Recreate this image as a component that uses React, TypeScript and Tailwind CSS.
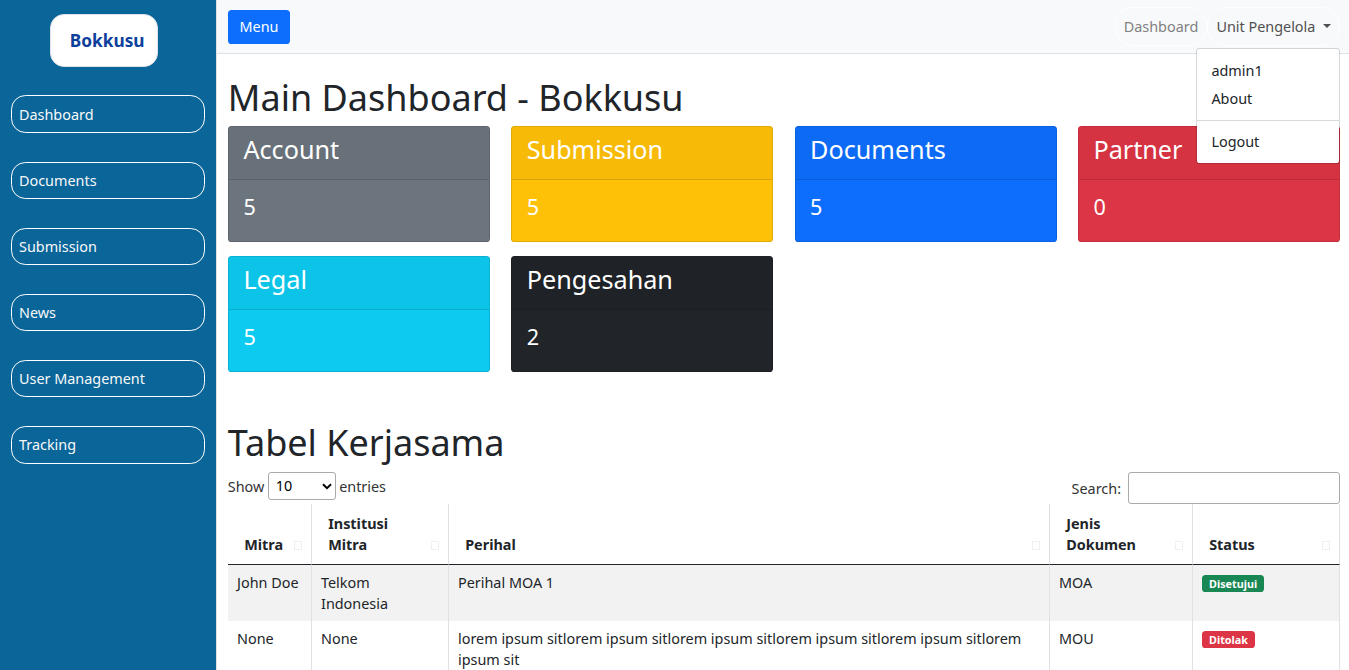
import React from "react";

const links = ["Dashboard", "Documents", "Submission", "News", "User Management", "Tracking"];

const cards = [
  { title: "Account", value: 5, color: "bg-[#6c757d]" },
  { title: "Submission", value: 5, color: "bg-[#ffc107]" },
  { title: "Documents", value: 5, color: "bg-[#0d6efd]" },
  { title: "Partner", value: 0, color: "bg-[#dc3545]" },
  { title: "Legal", value: 5, color: "bg-[#0dcaf0]" },
  { title: "Pengesahan", value: 2, color: "bg-[#212529]" },
];

const headers = ["Mitra", "Institusi Mitra", "Perihal", "Jenis Dokumen", "Status"];

const rows = [
  { mitra: "John Doe", institusi: "Telkom Indonesia", perihal: "Perihal MOA 1", jenis: "MOA", status: "Disetujui", badge: "bg-[#198754]" },
  {
    mitra: "None",
    institusi: "None",
    perihal: "lorem ipsum sitlorem ipsum sitlorem ipsum sitlorem ipsum sitlorem ipsum sitlorem ipsum sit",
    jenis: "MOU",
    status: "Ditolak",
    badge: "bg-[#dc3545]",
  },
];

function Sidebar() {
  return (
    <aside className="w-[216px] shrink-0 bg-[#0a6599] text-white">
      <div className="ml-[50px] mt-[14px] flex h-[53px] w-[108px] items-center rounded-[14px] border border-[#dee2e6] bg-white pl-[18.8px] text-[17.28px] font-bold text-[#0d409b]">
        Bokkusu
      </div>
      <nav className="mt-7 flex flex-col gap-[29px] px-[11px]">
        {links.map((l) => (
          <a key={l} className="h-[37px] rounded-[14.4px] border border-white pl-[7px] pt-[7px] text-[#f8f9fa] first:h-[38px] first:pt-[8px] last:h-[38px]">
            {l}
          </a>
        ))}
      </nav>
    </aside>
  );
}

function Topbar() {
  return (
    <header className="flex h-[54px] items-start justify-between border-b border-[#dee2e6] bg-[#f8f9fa] pl-[11px] pr-[9px]">
      <button className="mt-[10px] h-[34px] w-[62px] rounded-[3.6px] bg-[#0d6efd] pb-[2px] text-white">Menu</button>
      <div className="mt-[7px] flex">
        <a className="flex h-[39px] w-[92px] items-center justify-center rounded-[18px] border border-white text-[#808182]">Dashboard</a>
        <div className="relative">
          <a className="flex h-[39px] w-[133px] items-center rounded-[18px] border border-white pl-[8.4px] text-[#4f5051]">
            Unit Pengelola
            <svg className="ml-[7.6px] mt-[-2px]" width="8" height="4" viewBox="0 0 8 4" fill="#4f5051">
              <path d="M0 0h8L4 4z" />
            </svg>
          </a>
          <div className="absolute right-0 top-[41px] z-10 h-[116px] w-[144px] rounded-[3.6px] border border-black/15 bg-white bg-clip-padding pt-[7px] text-[#212529]">
            <div className="flex h-7 items-center pl-[14.4px]">admin1</div>
            <div className="flex h-7 items-center pl-[14.4px]">About</div>
            <div className="mb-[7px] mt-[8px] h-px bg-[#d9d9d9]" />
            <div className="flex h-[26px] items-center pl-[14.4px]">Logout</div>
          </div>
        </div>
      </div>
    </header>
  );
}

function DataTable() {
  return (
    <table className="w-[1112px] table-fixed border-separate border-spacing-0 text-left">
      <colgroup>
        <col className="w-[84px]" />
        <col className="w-[137px]" />
        <col className="w-[601px]" />
        <col className="w-[143px]" />
        <col className="w-[147px]" />
      </colgroup>
      <thead>
        <tr className="h-[61px]">
          {headers.map((h) => (
            <th key={h} className="border-b border-r border-b-[#212529] border-r-[#dee2e6] pb-[9px] pl-[16.2px] pr-[9px] align-bottom font-bold">
              <div className="flex items-end justify-between">
                <span className={h.includes(" ") ? "w-[72px]" : ""}>{h}</span>
                <span className="mb-[5px] h-[9px] w-[8px] shrink-0 border border-[#f0f0f0]" />
              </div>
            </th>
          ))}
        </tr>
      </thead>
      <tbody>
        {rows.map((r) => (
          <tr key={r.mitra} className="h-14 odd:bg-[#f2f2f2] [&>td]:border-r [&>td]:border-[#dee2e6] [&>td]:py-[7px] [&>td]:pl-[9px] [&>td]:pr-[8px] [&>td]:align-top">
            <td className="whitespace-nowrap">{r.mitra}</td>
            <td>{r.institusi}</td>
            <td>{r.perihal}</td>
            <td>{r.jenis}</td>
            <td>
              <span className={"mt-[3px] flex h-[17px] w-fit items-center rounded-[3.6px] px-[7px] pt-px text-[10.8px] font-bold leading-none text-white " + r.badge}>
                {r.status}
              </span>
            </td>
          </tr>
        ))}
      </tbody>
    </table>
  );
}

export default function App() {
  return (
    <div className="flex h-screen overflow-hidden bg-white font-['Noto_Sans',sans-serif] text-[14.4px] leading-[21px] text-[#212529]">
      <Sidebar />
      <div className="min-w-0 flex-1 border-l border-[#dee2e6]">
        <Topbar />
        <main className="pl-[11px] pr-[9px]">
          <h1 className="-ml-[0.2px] mt-[22px] h-[50px] text-[36px] leading-[43px]">Main Dashboard - Bokkusu</h1>
          <div className="grid grid-cols-4 gap-x-[21.4px] gap-y-[14px]">
            {cards.map((c) => (
              <section key={c.title} className={"h-[116px] overflow-hidden rounded-[3.6px] border border-black/12 text-white " + c.color}>
                <h3 className="h-[53px] border-b border-black/12 bg-black/3 pl-[14.4px] pt-[7px] text-[25.2px] leading-[30px]">{c.title}</h3>
                <p className="pl-[14.4px] pt-[14px] text-[21.6px] leading-[26px]">{c.value}</p>
              </section>
            ))}
          </div>
          <h1 className="-ml-[0.2px] mt-[49px] text-[36px] leading-[43px]">Tabel Kerjasama</h1>
          <div className="mt-2 flex h-8 items-start justify-between text-[#333]">
            <label className="-ml-[0.2px] flex items-center gap-[3.4px]">
              Show
              <span className="flex h-[28px] w-[68px] items-center justify-between rounded-[3px] border border-[#aaa] pb-[2px] pl-[7px] pr-[3px] text-black">
                10
                <svg className="mt-[2px]" width="10" height="7" viewBox="0 0 10 7" fill="none" stroke="black" strokeWidth="2">
                  <path d="M1 1.2 5 5.2 9 1.2" />
                </svg>
              </span>
              entries
            </label>
            <label className="flex items-center gap-[7px]">
              Search:
              <input className="h-8 w-[212px] rounded-[3px] border border-[#aaa] bg-white px-1" />
            </label>
          </div>
          <DataTable />
        </main>
      </div>
    </div>
  );
}
